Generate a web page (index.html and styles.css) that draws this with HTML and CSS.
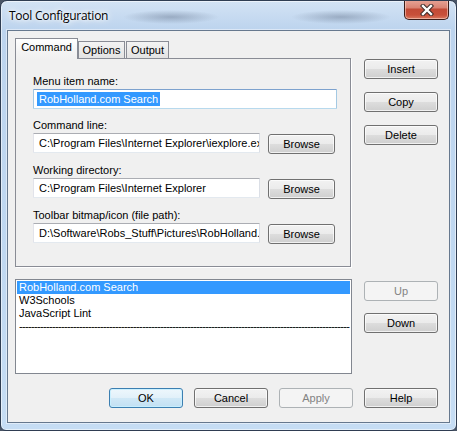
FILE: index.html
```html
<!DOCTYPE html>
<html>
<head>
<meta charset="utf-8">
<link rel="stylesheet" href="styles.css">
</head>
<body>
<div class="window">
  <div class="titlebar">
    <span class="title">Tool Configuration</span>
    <div class="close">
      <svg width="14" height="12" viewBox="0 0 14 12">
        <path d="M3 2 L11 10 M11 2 L3 10" stroke="#3a2a28" stroke-width="4.4" stroke-linecap="square"/>
        <path d="M3 2 L11 10 M11 2 L3 10" stroke="#ffffff" stroke-width="2.4" stroke-linecap="square"/>
      </svg>
    </div>
  </div>
  <div class="client">
    <div class="row-top">
      <div class="tabctl">
        <div class="tabs">
          <div class="tab sel">Command</div>
          <div class="tab t-options">Options</div>
          <div class="tab t-output">Output</div>
        </div>
        <div class="panel">
          <div class="field">
            <div class="label">Menu item name:</div>
            <div class="edit full focus"><span class="seltext">RobHolland.com Search</span></div>
          </div>
          <div class="field">
            <div class="label">Command line:</div>
            <div class="editrow">
              <div class="edit">C:\Program Files\Internet Explorer\iexplore.exe</div>
              <button class="btn browse">Browse</button>
            </div>
          </div>
          <div class="field">
            <div class="label">Working directory:</div>
            <div class="editrow">
              <div class="edit">C:\Program Files\Internet Explorer</div>
              <button class="btn browse">Browse</button>
            </div>
          </div>
          <div class="field">
            <div class="label">Toolbar bitmap/icon (file path):</div>
            <div class="editrow">
              <div class="edit">D:\Software\Robs_Stuff\Pictures\RobHolland.bmp</div>
              <button class="btn browse">Browse</button>
            </div>
          </div>
        </div>
      </div>
      <div class="btncol">
        <button class="btn">Insert</button>
        <button class="btn">Copy</button>
        <button class="btn">Delete</button>
      </div>
    </div>
    <div class="row-mid">
      <div class="listbox">
        <div class="item selected">RobHolland.com Search</div>
        <div class="item">W3Schools</div>
        <div class="item">JavaScript Lint</div>
        <div class="item sep">--------------------------------------------------------------------------------------------------------------</div>
      </div>
      <div class="btncol2">
        <button class="btn disabled">Up</button>
        <button class="btn">Down</button>
      </div>
    </div>
    <div class="row-bottom">
      <button class="btn default">OK</button>
      <button class="btn">Cancel</button>
      <button class="btn disabled">Apply</button>
      <button class="btn">Help</button>
    </div>
  </div>
</div>
</body>
</html>
```
FILE: styles.css
```css
html, body {
  margin: 0;
  padding: 0;
  background: #4a5566;
}
.window {
  width: 457px;
  height: 431px;
  box-sizing: border-box;
  border: 1px solid #2f3d52;
  border-radius: 7px 7px 6px 6px;
  padding: 0 6px 7px 6px;
  display: flex;
  flex-direction: column;
  background:
    radial-gradient(ellipse 48px 7px at 170px 16px, rgba(70,85,110,0.35), rgba(70,85,110,0) 100%),
    radial-gradient(ellipse 50px 7px at 340px 16px, rgba(70,85,110,0.35), rgba(70,85,110,0) 100%),
    linear-gradient(to bottom, #d3e3f4 0, #bdd4ee 28px, #c0d8f1 60%, #c6ddf4 100%);
  box-shadow: inset 0 0 0 1px rgba(255,255,255,0.55);
  font-family: "Liberation Sans", Arial, sans-serif;
  font-size: 11px;
  color: #000;
  overflow: hidden;
}
.titlebar {
  height: 29px;
  display: flex;
  align-items: flex-start;
}
.title {
  font-family: "Open Sans", "Noto Sans", sans-serif;
  font-size: 12px;
  letter-spacing: -0.25px;
  line-height: 16px;
  margin-top: 7px;
  margin-left: 2px;
  color: #000;
  text-shadow: 0 0 6px #fff, 0 0 10px #fff, 0 0 3px rgba(255,255,255,0.9);
}
.close {
  margin-left: auto;
  margin-right: 1px;
  margin-top: -2px;
  width: 45px;
  height: 21px;
  box-sizing: border-box;
  border: 1px solid #3b1c18;
  border-top: none;
  border-radius: 0 0 5px 5px;
  background: linear-gradient(to bottom, #e9a99c 0, #d98272 45%, #c24a36 50%, #c8503a 80%, #d97a60 100%);
  box-shadow: inset 0 0 0 1px rgba(255,220,210,0.55);
  display: flex;
  align-items: center;
  justify-content: center;
  padding-top: 1px;
}
.client {
  flex: 1;
  border: 1px solid #66788e;
  box-shadow: 0 0 0 1px rgba(255,255,255,0.45);
  background: #f0f0f0;
  padding: 7px 11px 14px 7px;
  display: flex;
  flex-direction: column;
}
.row-top {
  display: flex;
  gap: 13px;
}
.tabctl {
  width: 336px;
  display: flex;
  flex-direction: column;
}
.tabs {
  height: 20px;
  display: flex;
  align-items: flex-end;
  position: relative;
  z-index: 1;
}
.tab {
  box-sizing: border-box;
  height: 17px;
  border: 1px solid #898c95;
  border-bottom: none;
  background: linear-gradient(to bottom, #f3f3f3, #e3e3e3);
  text-align: center;
  line-height: 13px;
  padding-top: 2px;
}
.tab.sel {
  width: 63px;
  height: 21px;
  margin-bottom: -1px;
  background: linear-gradient(to bottom, #ffffff, #f3f3f3 70%, #f0f0f0);
}
.t-options { width: 47px; }
.t-output { width: 43px; margin-left: 1px; }
.panel {
  box-sizing: border-box;
  height: 209px;
  border: 1px solid #898c95;
  box-shadow: 1px 1px 0 #ffffff;
  background: #f0f0f0;
  padding: 16px 13px 0 17px;
  display: flex;
  flex-direction: column;
  gap: 10px;
}
.label {
  line-height: 13px;
  margin-bottom: 1px;
  white-space: nowrap;
}
.edit {
  box-sizing: border-box;
  height: 20px;
  width: 227px;
  background: #fff;
  border: 1px solid;
  border-color: #abadb3 #dbdfe6 #e3e9ef #e2e3ea;
  border-radius: 1px;
  padding: 0 0 0 5px;
  line-height: 18px;
  white-space: nowrap;
  overflow: hidden;
}
.edit.full { width: 304px; }
.edit.focus {
  border-color: #7da2ce #a4c9e3 #b7d9ed #a4c9e3;
  padding-left: 3px;
}
.seltext {
  background: #3399ff;
  color: #fff;
  padding: 1px 2px;
}
.editrow {
  display: flex;
  gap: 8px;
}
.btn {
  box-sizing: border-box;
  width: 74px;
  height: 20px;
  margin: 0;
  padding: 0;
  border: 1px solid #707070;
  border-radius: 3px;
  background: linear-gradient(to bottom, #f2f2f2 0, #ebebeb 50%, #dddddd 51%, #cfcfcf 100%);
  box-shadow: inset 0 0 0 1px rgba(255,255,255,0.7);
  font-family: "Liberation Sans", Arial, sans-serif;
  font-size: 11px;
  line-height: 18px;
  color: #000;
  text-align: center;
}
.btn.browse {
  width: 67px;
  margin-top: 1px;
}
.btn.disabled {
  border-color: #adb2b5;
  background: #f4f4f4;
  box-shadow: none;
  color: #838383;
}
.btn.default {
  border-color: #3c7fb1;
  background: linear-gradient(to bottom, #eef7fc 0, #e1f0f9 50%, #d0e8f6 51%, #c2e0f3 100%);
  box-shadow: inset 0 0 0 1px rgba(200,240,255,0.9);
}
.btncol {
  width: 74px;
  padding-top: 21px;
  display: flex;
  flex-direction: column;
  gap: 13px;
}
.row-mid {
  margin-top: 12px;
  display: flex;
  gap: 12px;
}
.listbox {
  box-sizing: border-box;
  width: 337px;
  height: 95px;
  border: 1px solid #828790;
  background: #fff;
  padding: 1px;
  overflow: hidden;
}
.item {
  line-height: 13px;
  height: 13px;
  padding-left: 2px;
  white-space: nowrap;
  overflow: hidden;
}
.item.selected {
  background: #3399ff;
  color: #fff;
}
.item.sep {
  letter-spacing: -0.66px;
}
.btncol2 {
  width: 74px;
  padding-top: 2px;
  display: flex;
  flex-direction: column;
  gap: 12px;
}
.row-bottom {
  margin-top: 14px;
  display: flex;
  justify-content: flex-end;
  gap: 11px;
}
```
